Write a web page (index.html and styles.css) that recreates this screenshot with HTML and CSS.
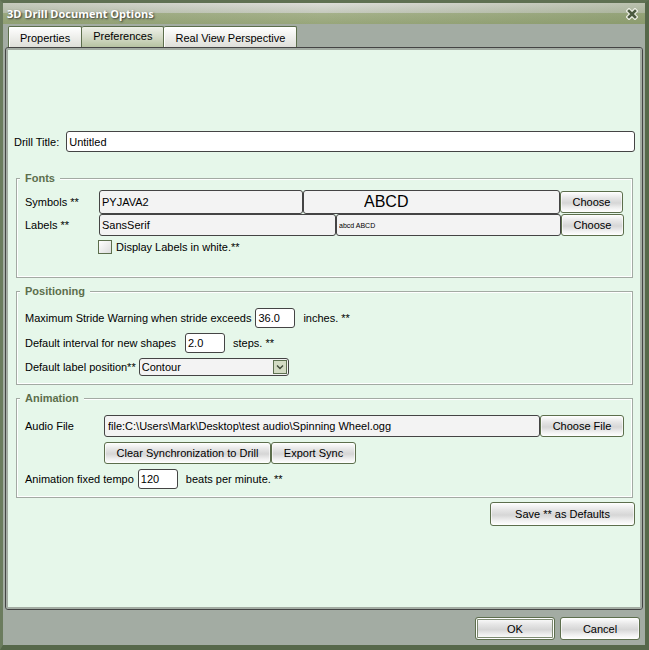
FILE: index.html
```html
<!DOCTYPE html>
<html lang="en">
	<head>
		<meta charset="UTF-8">
		<title>3D Drill Document Options</title>
		<link rel="stylesheet" href="styles.css">
	</head>
	<body>

		<div class="window">
			<div class="titlebar">
				<h1>3D Drill Document Options</h1>
				<button class="close" type="button" aria-label="Close">
					<svg width="12" height="12" viewBox="0 0 12 12">
						<path d="M3 3L9 9M9 3L3 9" stroke="#eef0e6" stroke-width="5" stroke-linecap="square"/>
						<path d="M3 3L9 9M9 3L3 9" stroke="#4c5b40" stroke-width="2.6" stroke-linecap="square"/>
					</svg>
				</button>
			</div>

			<div class="tabs" role="tablist">
				<button class="tab" type="button" role="tab">Properties</button>
				<button class="tab active" type="button" role="tab" aria-selected="true">Preferences</button>
				<button class="tab" type="button" role="tab">Real View Perspective</button>
			</div>

			<form class="panel" id="options">
				<div class="form">
					<div class="row title-row">
						<label for="drill">Drill Title:</label>
						<input class="field grow" id="drill" type="text" value="Untitled">
					</div>

					<fieldset class="fonts">
						<legend>Fonts</legend>
						<div class="row symbols">
							<label class="name" for="symbols">Symbols **</label>
							<input class="field font-name" id="symbols" type="text" value="PYJAVA2" readonly>
							<input class="field grow sample-big" type="text" value="ABCD" aria-label="Symbols sample" readonly>
							<button class="btn choose" type="button">Choose</button>
						</div>
						<div class="row labels">
							<label class="name" for="labels">Labels **</label>
							<input class="field grow" id="labels" type="text" value="SansSerif" readonly>
							<input class="field grow sample-small" type="text" value="abcd ABCD" aria-label="Labels sample" readonly>
							<button class="btn choose" type="button">Choose</button>
						</div>
						<div class="row check-row">
							<input class="check" id="white" type="checkbox">
							<label for="white">Display Labels in white.**</label>
						</div>
					</fieldset>

					<fieldset class="positioning">
						<legend>Positioning</legend>
						<div class="row">
							<label for="stride">Maximum Stride Warning when stride exceeds</label>
							<input class="field num" id="stride" type="text" value="36.0">
							<span class="unit">inches. **</span>
						</div>
						<div class="row">
							<label class="interval" for="interval">Default interval for new shapes</label>
							<input class="field num" id="interval" type="text" value="2.0">
							<span class="unit">steps. **</span>
						</div>
						<div class="row position-row">
							<label for="position">Default label position**</label>
							<div class="select">
								<select id="position">
									<option>Contour</option>
								</select>
								<svg class="arrow" width="14" height="14" viewBox="0 0 14 14">
									<rect x=".5" y=".5" width="13" height="13" fill="#d3dcc4" stroke="#5d7050"/>
									<path d="M4 5.5L7 8.5L10 5.5" fill="none" stroke="#3f4a38" stroke-width="1.4"/>
								</svg>
							</div>
						</div>
					</fieldset>

					<fieldset class="animation">
						<legend>Animation</legend>
						<div class="row file-row">
							<label class="name" for="audio">Audio File</label>
							<input class="field grow" id="audio" type="text" value="file:C:\Users\Mark\Desktop\test audio\Spinning Wheel.ogg" readonly>
							<button class="btn choose-file" type="button">Choose File</button>
						</div>
						<div class="row sync-row">
							<button class="btn clear" type="button">Clear Synchronization to Drill</button>
							<button class="btn export" type="button">Export Sync</button>
						</div>
						<div class="row">
							<label for="tempo">Animation fixed tempo</label>
							<input class="field num" id="tempo" type="text" value="120">
							<span class="unit">beats per minute. **</span>
						</div>
					</fieldset>

					<div class="save-row">
						<button class="btn save" type="button">Save ** as Defaults</button>
					</div>
				</div>
			</form>

			<div class="footer">
				<button class="btn ok" type="submit" form="options">OK</button>
				<button class="btn" type="button">Cancel</button>
			</div>
		</div>

	</body>
</html>
```
FILE: styles.css
```css
*{
	box-sizing: border-box;
	margin: 0;
	padding: 0;
}
body,input,button,select{
	font-family: "Liberation Sans", Arial, sans-serif;
	font-size: 11px;
	line-height: 14px;
	color: #000;
}
.window{
	display: flex;
	flex-direction: column;
	height: 100vh;
	background: #a3aca3;
	border: 3px solid #56684a;
	border-top-color: #5f7052;
	border-left-color: #6b7c5e;
	border-right-width: 4px;
	border-bottom-width: 5px;
}

/* title bar */
.titlebar{
	display: flex;
	align-items: center;
	justify-content: space-between;
	height: 21px;
	padding: 0 7px 0 4px;
	background: linear-gradient(90deg, rgba(110,130,80,.2), transparent 50%, rgba(110,130,80,.3)),
		linear-gradient(#dcdcd8, #c4c9bc 48%, #a5b18b 48%, #98a67a);
}
h1{
	font: bold 11px/16px "Open Sans", "Noto Sans", sans-serif;
	color: #fff;
	text-shadow: 1px 1px 2px #333;
}
.close{
	border: 0;
	background: none;
	height: 12px;
}
.close svg{
	display: block;
}

/* tabs */
.tabs{
	display: flex;
	padding: 2px 5px 0;
}
.tab{
	height: 21px;
	padding: 2px 11px 0;
	border: 1px solid #5c6e4c;
	border-bottom: 0;
	border-radius: 2px 2px 0 0;
	background: linear-gradient(#fff, #dedfd9);
	box-shadow: inset 1px 1px 0 #fff;
}
.tab + .tab{
	border-left: 0;
}
.tab.active{
	padding-bottom: 4px;
	padding-top: 1px;
	background: linear-gradient(#eef0e8, #d5dbc8 50%, #b7c3a2);
	box-shadow: none;
}

/* panel */
.panel{
	flex: 1;
	display: flex;
	margin: 0 2px;
	background: #e6f7ea;
	border: 1px solid #444;
	border-radius: 3px;
	box-shadow: inset 0 0 0 2px #a3aca3;
	padding: 2px 7px 2px 8px;
}
.form{
	flex: 1;
	min-width: 0;
	margin: auto 0;
}
.row{
	display: flex;
	align-items: center;
}
.grow{
	flex: 1;
	min-width: 0;
}
.title-row{
	gap: 7px;
	margin-bottom: 19px;
}
fieldset{
	min-width: 0;
	margin: 0 2px 6px;
	padding: 10px 8px 8px;
	border: 1px solid #a3aaa3;
	box-shadow: inset 0 0 0 1px #fff;
}
legend{
	padding: 0 5px;
	margin-left: -5px;
	font-weight: bold;
	color: #5c6e4c;
	background: #e6f7ea;
}

/* controls */
.field{
	height: 21px;
	padding: 0 2px;
	border: 1px solid #444;
	border-radius: 3px;
	background: #fff;
}
.field:read-only{
	background: #f3f3f3;
}
.num{
	width: 40px;
	height: 20px;
	margin-left: 4px;
}
.unit{
	margin-left: 8px;
}
.btn{
	height: 22px;
	border: 1px solid #5c6e4c;
	border-radius: 3px;
	background: linear-gradient(#fff, #e6e6e6 30%, #d6d6d6 55%, #f0f0f0 80%, #fff);
	box-shadow: inset 0 0 0 1px rgba(255,255,255,.6);
}

/* fonts */
.fonts{
	padding-top: 5px;
	padding-bottom: 23px;
}
.fonts .name{
	width: 74px;
}
.choose{
	width: 63px;
}
.symbols .field{
	height: 24px;
}
.symbols .font-name{
	width: 204px;
}
.symbols{
	padding-right: 1px;
}
.labels .field{
	height: 22px;
}
.labels .sample-small{
	flex: none;
	width: 225px;
	font-size: 7px;
}
.symbols .sample-big{
	font-size: 16px;
	padding-left: 60px;
}
.check-row{
	margin-top: 4px;
	padding-left: 73px;
	gap: 4px;
}
.check{
	appearance: none;
	width: 14px;
	height: 14px;
	border: 1px solid #5c6e4c;
	background: linear-gradient(135deg, #fff, #dcdcdc);
}

/* positioning, animation */
.positioning,.animation{
	display: grid;
	gap: 5px;
}
.interval{
	width: 156px;
}
.select{
	position: relative;
	width: 150px;
	margin-left: 3px;
}
.select select{
	display: block;
	appearance: none;
	width: 100%;
	height: 18px;
	padding: 0 2px;
	border: 1px solid #444;
	border-radius: 3px;
	background: #f3f3f3;
}
.arrow{
	position: absolute;
	top: 2px;
	right: 2px;
	pointer-events: none;
}
.file-row .name{
	width: 79px;
}
.file-row .field{
	height: 22px;
	padding: 0 3px;
}
.choose-file{
	width: 84px;
}
.sync-row{
	padding-left: 79px;
}
.clear{
	width: 167px;
}
.export{
	width: 85px;
}
.save-row{
	display: flex;
	justify-content: flex-end;
	margin-top: -2px;
}
.save{
	width: 145px;
	height: 24px;
}

/* footer */
.footer{
	display: flex;
	justify-content: flex-end;
	gap: 5px;
	padding: 7px 5px 5px;
}
.footer .btn{
	width: 80px;
	height: 23px;
}
.footer .ok{
	box-shadow: inset 0 0 0 1px #fff, inset 0 0 0 2px #7d8a72;
}
```
